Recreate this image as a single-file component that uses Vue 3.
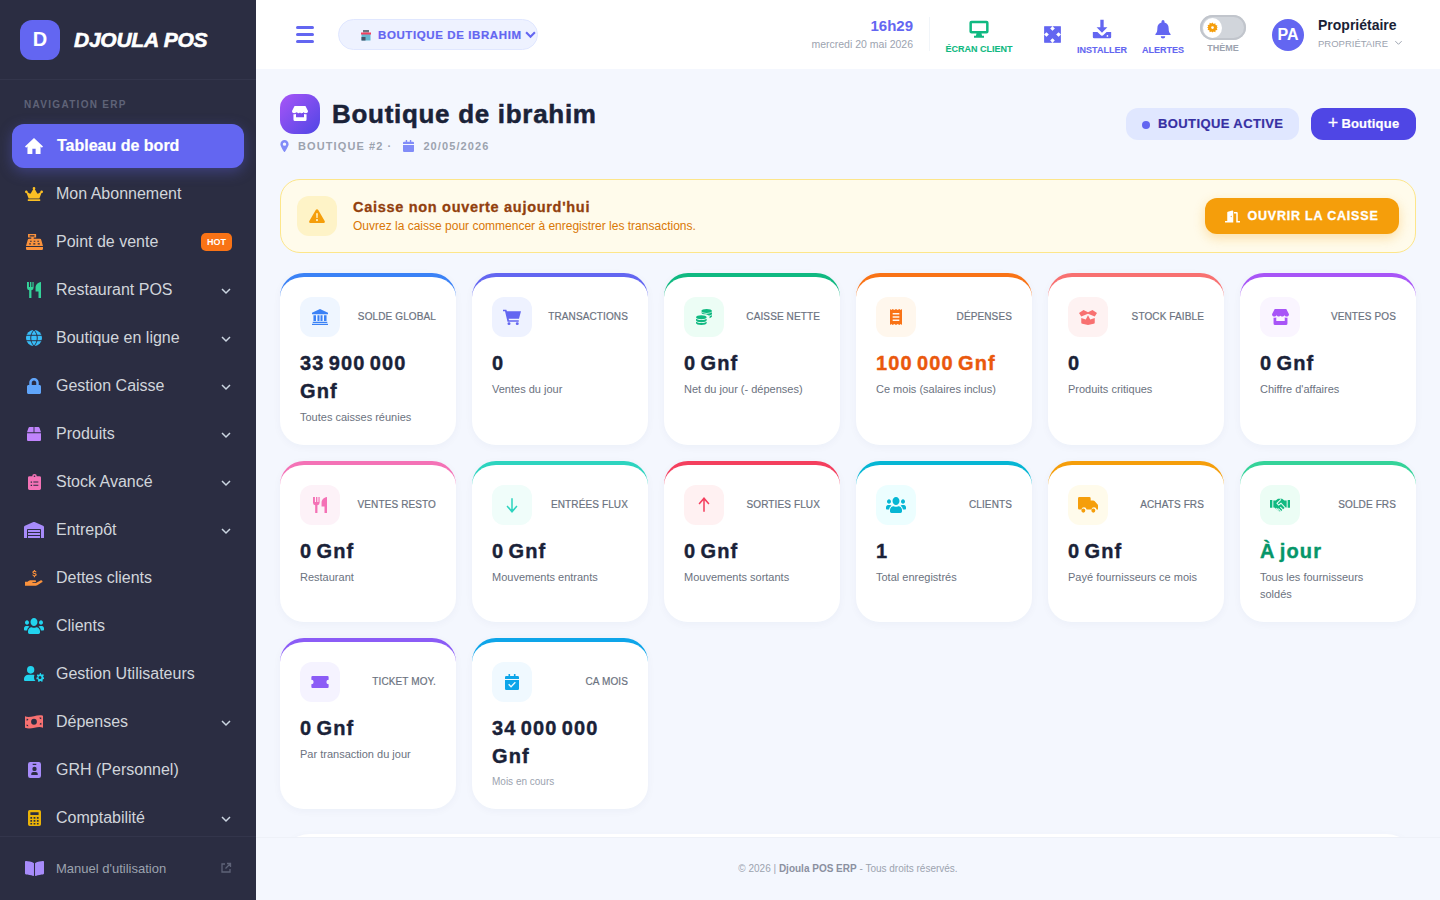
<script setup>
const icons = {
  home: { vb: '1 3 22 18', d: 'M12 3 1 12.5 2.400 14 4 12.700V21h6v-6h4v6h6v-8.300l1.600 1.300L23 12.500z' },
  crown: { vb: '0 0 640 512', d: 'M528 448H112c-8.800 0-16 7.200-16 16v32c0 8.800 7.200 16 16 16h416c8.800 0 16-7.200 16-16v-32c0-8.800-7.200-16-16-16zm64-320c-26.500 0-48 21.500-48 48 0 7.100 1.600 13.700 4.400 19.800L476 239.200c-15.400 9.200-35.300 4-44.200-11.600L350.300 85C361 76.200 368 63 368 48c0-26.500-21.500-48-48-48s-48 21.500-48 48c0 15 7 28.200 17.600 37l-81.500 142.600c-8.900 15.600-28.900 20.800-44.200 11.600l-72.300-43.400c2.700-6 4.400-12.700 4.400-19.800 0-26.500-21.500-48-48-48S0 149.500 0 176s21.500 48 48 48c2.600 0 5.200-.4 7.700-.8L128 416h384l72.300-192.800c2.500.4 5.100.8 7.700.8 26.500 0 48-21.500 48-48s-21.500-48-48-48z' },
  cash: { vb: '1.500 2 21 20', d: 'M4 2h10v4.500h-3V8h7.500a2 2 0 0 1 2 1.700L22.500 17h-21l2-7.300A2 2 0 0 1 5.500 8H8V6.500H4zM1.500 18.200h21v2.300A1.500 1.500 0 0 1 21 22H3a1.500 1.500 0 0 1-1.500-1.500zM6.500 10.300v1.500h2v-1.500zM11 10.300v1.500h2v-1.500zM15.500 10.300v1.500h2v-1.500zM5.500 13.500V15h2v-1.500zM10.500 13.500V15h2.500v-1.500zM16 13.500V15h2.500v-1.500zM6 3.500V5h6V3.500z' },
  utensils: { vb: '3 1 18 22', d: 'M3 1v8a3.500 3.500 0 0 0 2.800 3.400V23h2.900V12.400A3.500 3.500 0 0 0 11.500 9V1H10v7H8.600V1H6.900v7H5.500V1zM14 9c0-4 2.700-7.500 7-8v22h-3.200v-9H14z' },
  globe: { vb: '1 1 22 22', d: 'M12 1a11 11 0 1 0 0 22 11 11 0 0 0 0-22z', cut: 'M1 8.300h22M1 15.700h22M12 1c-6 6-6 16 0 22M12 1c6 6 6 16 0 22' },
  lock: { vb: '0 0 448 512', d: 'M400 224h-24v-72C376 68.200 307.800 0 224 0S72 68.200 72 152v72H48c-26.500 0-48 21.500-48 48v192c0 26.500 21.500 48 48 48h352c26.500 0 48-21.500 48-48V272c0-26.500-21.500-48-48-48zm-104 0H152v-72c0-39.700 32.300-72 72-72s72 32.300 72 72v72z' },
  box: { vb: '0 0 512 512', d: 'M509.500 184.600L458.900 32.800C452.400 13.200 434.100 0 413.400 0H272v192h238.700c-.4-2.500-.4-5-1.200-7.400zM240 0H98.600c-20.700 0-39 13.200-45.500 32.800L2.500 184.600c-.8 2.400-.8 4.900-1.200 7.400H240V0zM0 224v240c0 26.500 21.500 48 48 48h416c26.500 0 48-21.500 48-48V224H0z' },
  clipboard: { vb: '3.500 .5 17 22.500', d: 'M5.500 3.500H9a3 3 0 0 1 6 0h3.500A2 2 0 0 1 20.500 5.500V21a2 2 0 0 1-2 2h-13a2 2 0 0 1-2-2V5.500a2 2 0 0 1 2-2zM12 2.600a1.100 1.100 0 1 0 0 2.200 1.100 1.100 0 0 0 0-2.200zM7 11v1.800h1.800V11zM7 15.500v1.800h1.800v-1.800zM10.500 11.200v1.400H17v-1.400zM10.500 15.700v1.400H17v-1.400z' },
  warehouse: { vb: '0 0 640 512', d: 'M504 352H136.400c-4.400 0-8 3.600-8 8l-.1 48c0 4.400 3.600 8 8 8H504c4.400 0 8-3.600 8-8v-48c0-4.400-3.600-8-8-8zm0 96H136.100c-4.400 0-8 3.600-8 8l-.1 48c0 4.400 3.600 8 8 8h368c4.400 0 8-3.600 8-8v-48c0-4.400-3.600-8-8-8zm0-192H136.600c-4.400 0-8 3.600-8 8l-.1 48c0 4.400 3.600 8 8 8H504c4.400 0 8-3.600 8-8v-48c0-4.400-3.600-8-8-8zm106.500-139L338.400 3.700a48.150 48.150 0 0 0-36.900 0L29.500 117C11.700 124.500 0 141.900 0 161.300V504c0 4.400 3.600 8 8 8h80c4.400 0 8-3.600 8-8V256c0-17.600 14.600-32 32.600-32h382.800c18 0 32.600 14.400 32.600 32v248c0 4.400 3.600 8 8 8h80c4.400 0 8-3.600 8-8V161.300c0-19.400-11.700-36.800-29.500-44.300z' },
  hand: { vb: '.5 1 23 22', d: 'M.5 17h3.300c1.500-1.600 3.200-2 4.700-2h4.500c1 0 1.600.6 1.600 1.400s-.7 1.400-1.600 1.400H10v1h4.500l5.700-3.300c1-.5 2-.2 2.500.5.400.7.200 1.500-.5 2l-6 4c-.6.400-1.200.5-2 .5H.5zM11.800 1h1.500v1.200c1 .2 1.700.7 2 1.500l-1.200.6c-.3-.6-.8-.9-1.500-.9-.8 0-1.200.3-1.200.8 0 .5.500.7 1.500.9 1.400.3 2.500.8 2.500 2.300 0 1.100-.8 1.900-2.100 2.100V10.800h-1.500V9.500c-1.100-.2-1.900-.8-2.300-1.800l1.300-.5c.3.700.9 1.100 1.700 1.100.9 0 1.400-.3 1.400-.9 0-.5-.5-.7-1.600-1C10.900 6.100 10 5.600 10 4.200c0-1 .7-1.800 1.800-2z' },
  users: { vb: '0 32 640 448', d: 'M96 224c35.300 0 64-28.700 64-64s-28.700-64-64-64-64 28.700-64 64 28.700 64 64 64zm448 0c35.300 0 64-28.700 64-64s-28.700-64-64-64-64 28.700-64 64 28.700 64 64 64zm32 32h-64c-17.600 0-33.500 7.100-45.100 18.600 40.300 22.100 68.900 62 75.100 109.400h66c17.700 0 32-14.300 32-32v-32c0-35.300-28.700-64-64-64zm-256 0c61.900 0 112-50.100 112-112S381.900 32 320 32 208 82.100 208 144s50.100 112 112 112zm76.800 32h-8.300c-20.800 10-43.900 16-68.500 16s-47.600-6-68.500-16h-8.300C179.600 288 128 339.600 128 403.200V432c0 26.500 21.500 48 48 48h288c26.500 0 48-21.500 48-48v-28.800c0-63.600-51.600-115.200-115.200-115.200zm-223.700-13.400C161.500 263.100 145.600 256 128 256H64c-35.300 0-64 28.700-64 64v32c0 17.700 14.300 32 32 32h65.900c6.300-47.400 34.900-87.300 75.200-109.400z' },
  usercog: { vb: '0 1 30 23', d: 'M10 1a5.500 5.500 0 1 1 0 11 5.500 5.500 0 0 1 0-11zM6.500 13.500h7c.8 0 1.500.1 2.200.3-.5 1-.7 2.100-.7 3.200 0 2.200.9 4.200 2.300 5.500H1.500A1.500 1.500 0 0 1 0 21v-1.500c0-3.300 3-6 6.500-6zM24 11l1.200.1.500 1.800 1.300.6 1.600-.9 1.200 1.700-1.100 1.400.2 1.300 1.600.7-.3 2.100-1.800.2-.7 1.100.6 1.700-1.900 1-1.100-1.300h-1.500L22.600 24l-1.900-1 .6-1.700-.7-1.100-1.800-.2-.3-2.100 1.600-.7.200-1.300-1.100-1.400 1.200-1.700 1.600.9 1.300-.6.500-1.800zM24 15.200a2.200 2.200 0 1 0 0 4.400 2.200 2.200 0 0 0 0-4.400z' },
  money: { vb: '1 2 28 21', d: 'M1 4C9 8 19 0 29 3v18C21 17 11 25 1 21zM15 7.500a4.500 4.500 0 1 0 0 9 4.500 4.500 0 0 0 0-9zM3.500 7.500v3a3 3 0 0 0 2.800-2.600zM26.500 16.500v-3a3 3 0 0 0-2.800 2.800zM26.300 5.700l-3 .1a3 3 0 0 0 3 2.700zM3.500 18.500l2.800.4a3 3 0 0 0-2.800-2.800z' },
  idbadge: { vb: '3 1 18 22', d: 'M6 1h12a3 3 0 0 1 3 3v16a3 3 0 0 1-3 3H6a3 3 0 0 1-3-3V4a3 3 0 0 1 3-3zM12 7.500a3 3 0 1 0 0 6 3 3 0 0 0 0-6zM7.500 19h9v-1.500c0-1.500-1.200-2.700-2.700-2.700h-3.600c-1.500 0-2.700 1.200-2.700 2.700zM9.500 3.500V5h5V3.500z' },
  calc: { vb: '2.500 1 19 22', d: 'M5 1h14a2.500 2.500 0 0 1 2.500 2.500v17A2.500 2.500 0 0 1 19 23H5a2.500 2.500 0 0 1-2.500-2.500v-17A2.500 2.500 0 0 1 5 1zM6 4v4h12V4zM6 10.500v2.500h2.500v-2.500zM10.700 10.500v2.500h2.600v-2.500zM15.500 10.500v2.500H18v-2.500zM6 14.800v2.500h2.500v-2.500zM10.700 14.800v2.500h2.600v-2.500zM15.500 14.800v2.500H18v-2.500zM6 18.800V21h2.500v-2.200zM10.700 18.800V21h2.600v-2.200zM15.500 18.800V21H18v-2.200z' },
  book: { vb: '0 30 576 450', d: 'M542.220 32.050c-54.800 3.110-163.720 14.430-230.960 55.590-4.640 2.840-7.270 7.890-7.270 13.170v363.870c0 11.550 12.630 18.850 23.280 13.490 69.180-34.820 169.230-44.320 218.700-46.920 16.890-.89 30.020-14.430 30.020-30.660V62.750c.01-17.710-15.350-31.740-33.770-30.700zM264.730 87.640C197.500 46.480 88.580 35.170 33.780 32.050 15.360 31.010 0 45.040 0 62.750V400.600c0 16.240 13.130 29.780 30.020 30.660 49.490 2.600 149.590 12.110 218.770 46.950 10.620 5.350 23.210-1.940 23.210-13.460V100.630c0-5.290-2.620-10.140-7.270-12.990z' },
  store: { vb: '1 2.500 22 20', d: 'M4.500 2.500h15L23 9c0 1.800-1.400 3-3 3-1.200 0-2.300-.6-2.800-1.600-.6 1-1.800 1.600-3 1.600s-1.700-.4-2.200-1c-.5.600-1.200 1-2.200 1-1.200 0-2.400-.6-3-1.600C6.300 11.400 5.200 12 4 12c-1.600 0-3-1.200-3-3zM3 13.400c.3.100.7.100 1 .1 1 0 1.800-.2 2.500-.7v4.700h11v-4.700c.7.500 1.500.7 2.500.7.300 0 .7 0 1-.1v7.100a2 2 0 0 1-2 2H5a2 2 0 0 1-2-2z' },
  marker: { vb: '0 0 352 512', d: 'M156.300 501.700C26 291 0 214.500 0 176 0 78.800 78.800 0 176 0s176 78.800 176 176c0 38.500-26 115-156.300 325.700-9 13.700-30.400 13.700-39.400 0zM176 248a72 72 0 1 0 0-144 72 72 0 0 0 0 144z' },
  calendar: { vb: '2 1 20 22', d: 'M7 1h2.500v3H14.500V1H17v3h3a2 2 0 0 1 2 2v2.500H2V6a2 2 0 0 1 2-2h3zM2 10h20v11a2 2 0 0 1-2 2H4a2 2 0 0 1-2-2z' },
  desktop: { vb: '0 0 24 24', d: 'M3 2h18a2.500 2.500 0 0 1 2.500 2.500V15a2.500 2.500 0 0 1-2.500 2.500h-6l.7 2.500H18v2.500H6V20h2.300l.7-2.500H3A2.500 2.500 0 0 1 .5 15V4.500A2.500 2.500 0 0 1 3 2zM3.500 5v9.500h17V5z' },
  expand: { vb: '0 0 24 24', d: 'M1 1h9L7.500 3.500 12 8l4.500-4.500L14 1h9v9l-2.500-2.500L16 12l4.500 4.500L23 14v9h-9l2.500-2.500L12 16l-4.500 4.500L10 23H1v-9l2.500 2.500L8 12 3.500 7.500 1 10z' },
  download: { vb: '0 0 24 24', d: 'M10 1h4v9h4.500L12 16.500 5.500 10H10zM1 15.500h5.500L10 19a2.800 2.800 0 0 0 4 0l3.500-3.500H23v6a1.500 1.500 0 0 1-1.500 1.500h-19A1.500 1.500 0 0 1 1 21.500zM18.500 19.300a1 1 0 1 0 0 2 1 1 0 0 0 0-2z' },
  bell: { vb: '0 0 24 24', d: 'M12 0a2 2 0 0 1 2 2v1.200c3.500.8 5.500 3.700 5.500 7.300 0 5 1 6.500 2.500 8 .5.600.2 1.500-.8 1.500H2.800c-1 0-1.300-.9-.8-1.500 1.500-1.500 2.500-3 2.500-8 0-3.600 2-6.500 5.500-7.300V2a2 2 0 0 1 2-2zM9 21.500h6a3 3 0 0 1-6 0z' },
  sun: { vb: '0 0 24 24', d: 'M12 1l2.500 3.200 3.800-1.400.4 4 4 .7-1.500 3.700L24 12l-2.800 1.800 1.500 3.700-4 .7-.4 4-3.800-1.400L12 23l-2.500-2.200-3.800 1.400-.4-4-4-.7 1.500-3.700L0 12l2.800-1.800L1.300 6.500l4-.7.4-4 3.800 1.400zM12 9a3 3 0 1 0 0 6 3 3 0 0 0 0-6z' },
  warning: { vb: '0 0 24 24', d: 'M12 2c.8 0 1.500.4 1.900 1.100l9.600 16.500c.8 1.400-.2 3-1.900 3H2.400c-1.700 0-2.700-1.600-1.900-3L10.100 3.100C10.500 2.400 11.200 2 12 2zM10.700 8l.4 7h1.800l.4-7zM12 16.500a1.600 1.600 0 1 0 0 3.200 1.600 1.600 0 0 0 0-3.200z' },
  door: { vb: '0 0 640 512', d: 'M624 448h-80V113.400C544 86.200 522.500 64 496 64H384v64h96v384h144c8.800 0 16-7.200 16-16v-32c0-8.800-7.200-16-16-16zM312.200 1L120.200 50.700C105.800 54.400 96 67.100 96 81.900V448H16c-8.800 0-16 7.200-16 16v32c0 8.800 7.200 16 16 16h336V33.200c0-21-19.500-36.500-39.800-32.200zM264 288c-13.300 0-24-14.300-24-32s10.700-32 24-32 24 14.300 24 32-10.700 32-24 32z' },
  bank: { vb: '1 0 22 24', d: 'M12 0 23 5.500V8H1V5.500zM3 9.500h3.500V18H3zM8.500 9.500h2.800V18H8.500zM12.700 9.500h2.800V18h-2.800zM17.500 9.500H21V18h-3.500zM2 19.300h20V21H2zM1 22h22v2H1z' },
  cart: { vb: '0 0 24 24', d: 'M0 1h4.500l.7 2.500H24l-2.700 11H7.500l.5 2.200h13v2.300H6L2.700 3.300H0zM8 20a2 2 0 1 1 0 4 2 2 0 0 1 0-4zM19 20a2 2 0 1 1 0 4 2 2 0 0 1 0-4z' },
  coins: { vb: '0 0 24 24', d: 'M16 0c4.400 0 8 1.300 8 3s-3.600 3-8 3-8-1.300-8-3 3.600-3 8-3zM8 5c1.700 1.200 4.900 2 8 2s6.300-.8 8-2v2c0 1.400-2.100 2.500-5 2.900C17.200 8.800 14.700 8 12 8c-2.300 0-4-1.300-4-3zM24 9v2c0 1.200-1.600 2.200-3.800 2.700L20.500 11C22 10.700 23.300 10 24 9zM8 9.500c4.400 0 8 1.300 8 3s-3.600 3-8 3-8-1.300-8-3 3.600-3 8-3zM0 14.500c1.700 1.200 4.900 2 8 2s6.300-.8 8-2v2.200c0 1.700-3.600 3-8 3s-8-1.300-8-3zM0 19c1.700 1.200 4.900 2 8 2s6.300-.8 8-2v2c0 1.700-3.600 3-8 3s-8-1.300-8-3z' },
  receipt: { vb: '0 0 18 24', d: 'M0 0l2 1.500L4 0l2.500 1.500L9 0l2.500 1.500L14 0l2 1.500L18 0v24l-2-1.500-2 1.500-2.500-1.500L9 24l-2.500-1.500L4 24l-2-1.500L0 24zM4 6v2.200h10V6zM4 10.900v2.200h10v-2.200zM4 15.800V18h10v-2.200z' },
  boxopen: { vb: '0 0 24 20', d: 'M0 4 6 0l6 3 6-3 6 4-3 4.500L12 5 3 8.500zM3 10.500l6 2L12 7l3 5.500 6-2v6a2 2 0 0 1-1.500 1.900L12 20l-7.500-1.600A2 2 0 0 1 3 16.500z' },
  ticket: { vb: '0 0 24 16', d: 'M2 0h20a1.500 1.500 0 0 1 1.500 1.500V5a3 3 0 0 0 0 6v3.500A1.500 1.500 0 0 1 22 16H2A1.500 1.500 0 0 1 .5 14.500V11a3 3 0 0 0 0-6V1.500A1.500 1.500 0 0 1 2 0z' },
  calcheck: { vb: '1 0 22 24', d: 'M6.500 0H9v3h6V0h2.500v3H21a2 2 0 0 1 2 2v2.500H1V5a2 2 0 0 1 2-2h3.500zM1 9h22v13a2 2 0 0 1-2 2H3a2 2 0 0 1-2-2zM16.500 11.800l-6 6-3-3-1.500 1.500 4.500 4.500 7.500-7.500z' },
  arrowDown: { vb: '0 0 24 24', stroke: true, d: 'M12 2v20M3.500 13.500 12 22l8.500-8.500' },
  arrowUp: { vb: '0 0 24 24', stroke: true, d: 'M12 22V2M3.500 10.500 12 2l8.500 8.500' },
  truck: { vb: '0 1 30 23', d: 'M2 1h15a2 2 0 0 1 2 2v3h3.800c.8 0 1.500.3 2 .9l4.300 4.600c.6.500.9 1.200.9 2V19h-2.100a4 4 0 0 0-7.800 0h-7.200a4 4 0 0 0-7.800 0H2a2 2 0 0 1-2-2V3a2 2 0 0 1 2-2zM8 17.500a3 3 0 1 1 0 6 3 3 0 0 1 0-6zM23 17.500a3 3 0 1 1 0 6 3 3 0 0 1 0-6z' },
  handshake: { vb: '0 3 30 20', d: 'M0 6h3.500v11H0zM26.500 6H30v11h-3.500zM5 6.500h3.500L12 4h6l3.500 2.500H25v10h-2.500L16.500 22h-3l-7-5.500H5z', cut: 'M16.500 5 10.500 10.500 13 13 16.500 10.500 23 17M13 21 9.500 17.500M16.500 22 12.500 18M19.500 20 15.500 16', cutWidth: 1.500 }
}

const navItems = [
  { label: 'Mon Abonnement', icon: 'crown', color: '#fbbf24', w: 18, h: 14 },
  { label: 'Point de vente', icon: 'cash', color: '#fb923c', w: 17, h: 16, hot: true },
  { label: 'Restaurant POS', icon: 'utensils', color: '#34d399', w: 14, h: 16, arrow: true },
  { label: 'Boutique en ligne', icon: 'globe', color: '#38bdf8', w: 16, h: 16, arrow: true },
  { label: 'Gestion Caisse', icon: 'lock', color: '#60a5fa', w: 14, h: 16, arrow: true },
  { label: 'Produits', icon: 'box', color: '#c084fc', w: 14, h: 14, arrow: true },
  { label: 'Stock Avancé', icon: 'clipboard', color: '#f472b6', w: 13, h: 16, arrow: true },
  { label: 'Entrepôt', icon: 'warehouse', color: '#a78bfa', w: 20, h: 16, arrow: true },
  { label: 'Dettes clients', icon: 'hand', color: '#fb923c', w: 18, h: 16 },
  { label: 'Clients', icon: 'users', color: '#22d3ee', w: 20, h: 16 },
  { label: 'Gestion Utilisateurs', icon: 'usercog', color: '#22d3ee', w: 20, h: 16 },
  { label: 'Dépenses', icon: 'money', color: '#f87171', w: 18, h: 14, arrow: true },
  { label: 'GRH (Personnel)', icon: 'idbadge', color: '#a78bfa', w: 13, h: 16 },
  { label: 'Comptabilité', icon: 'calc', color: '#eab308', w: 13, h: 16, arrow: true }
]

const stats = [
  { label: 'Solde global', value: '33 900 000 Gnf', desc: 'Toutes caisses réunies', icon: 'bank', w: 16, h: 16, color: '#3b82f6', tint: '#eff6ff' },
  { label: 'Transactions', value: '0', desc: 'Ventes du jour', icon: 'cart', w: 18, h: 16, color: '#6366f1', tint: '#eef2ff' },
  { label: 'Caisse nette', value: '0 Gnf', desc: 'Net du jour (- dépenses)', icon: 'coins', w: 16, h: 16, color: '#10b981', tint: '#ecfdf5' },
  { label: 'Dépenses', value: '100 000 Gnf', desc: 'Ce mois (salaires inclus)', icon: 'receipt', w: 12, h: 16, color: '#f97316', tint: '#fff7ed', valueColor: '#ea580c' },
  { label: 'Stock faible', value: '0', desc: 'Produits critiques', icon: 'boxopen', w: 18, h: 15, color: '#f87171', tint: '#fef2f2' },
  { label: 'Ventes POS', value: '0 Gnf', desc: "Chiffre d'affaires", icon: 'store', w: 17, h: 16, color: '#a855f7', tint: '#faf5ff' },
  { label: 'Ventes Resto', value: '0 Gnf', desc: 'Restaurant', icon: 'utensils', w: 14, h: 16, color: '#f472b6', tint: '#fdf2f8' },
  { label: 'Entrées flux', value: '0 Gnf', desc: 'Mouvements entrants', icon: 'arrowDown', w: 14, h: 16, color: '#2dd4bf', tint: '#f0fdfa' },
  { label: 'Sorties flux', value: '0 Gnf', desc: 'Mouvements sortants', icon: 'arrowUp', w: 14, h: 16, color: '#f43f5e', tint: '#fff1f2' },
  { label: 'Clients', value: '1', desc: 'Total enregistrés', icon: 'users', w: 20, h: 16, color: '#06b6d4', tint: '#ecfeff' },
  { label: 'Achats FRS', value: '0 Gnf', desc: 'Payé fournisseurs ce mois', icon: 'truck', w: 20, h: 16, color: '#f59e0b', tint: '#fffbeb' },
  { label: 'Solde FRS', value: 'À jour', desc: 'Tous les fournisseurs soldés', icon: 'handshake', w: 20, h: 14, color: '#34d399', iconColor: '#10b981', tint: '#ecfdf5', valueColor: '#059669' },
  { label: 'Ticket moy.', value: '0 Gnf', desc: 'Par transaction du jour', icon: 'ticket', w: 18, h: 12, color: '#8b5cf6', tint: '#f5f3ff' },
  { label: 'CA mois', value: '34 000 000 Gnf', desc: 'Mois en cours', icon: 'calcheck', w: 14, h: 16, color: '#0ea5e9', tint: '#f0f9ff', small: true }
]
</script>

<template>
  <div class="layout">
    <aside class="sidebar">
      <div class="brand">
        <div class="brand-logo">D</div>
        <span class="brand-name">DJOULA POS</span>
      </div>
      <div class="nav-scroll">
        <div class="nav-title">NAVIGATION ERP</div>
        <nav class="nav">
          <a class="nav-item active">
            <span class="nav-icon"><svg width="18" height="16" :viewBox="icons.home.vb" preserveAspectRatio="none"><path :d="icons.home.d" fill="#fff" /></svg></span>
            <span class="nav-label">Tableau de bord</span>
          </a>
          <a v-for="item in navItems" :key="item.label" class="nav-item">
            <span class="nav-icon" :style="{ color: item.color }">
              <svg :width="item.w" :height="item.h" :viewBox="icons[item.icon].vb" fill="currentColor" preserveAspectRatio="none">
                <path :d="icons[item.icon].d" fill-rule="evenodd" />
                <path v-if="icons[item.icon].cut" :d="icons[item.icon].cut" fill="none" stroke="#2b2d42" stroke-width="1.300" />
              </svg>
            </span>
            <span class="nav-label">{{ item.label }}</span>
            <span v-if="item.hot" class="hot">HOT</span>
            <svg v-if="item.arrow" class="chev" width="10" height="10" viewBox="0 0 10 10"><path d="M1 3l4 4 4-4" fill="none" stroke="#cbd5e1" stroke-width="1.500" /></svg>
          </a>
        </nav>
      </div>
      <div class="side-foot">
        <span class="nav-icon foot-icon"><svg width="19" height="15" :viewBox="icons.book.vb" preserveAspectRatio="none" fill="#a78bfa"><path :d="icons.book.d" /></svg></span>
        <span class="foot-label">Manuel d'utilisation</span>
        <svg width="12" height="12" viewBox="0 0 12 12" fill="none" stroke="#5f6378" stroke-width="1.300"><path d="M5 2H2v8h8V7M7 1.500h3.500V5M10.500 1.500 5.500 6.500" /></svg>
      </div>
    </aside>

    <div class="main">
      <header class="topbar">
        <button class="burger"><span></span><span></span><span></span></button>
        <div class="shop-select">
          <svg width="12" height="12" viewBox="0 0 12 12"><rect x="1.500" y="4" width="9" height="7.500" fill="#67b7d1" /><rect x="1.500" y="8" width="4" height="3.500" fill="#475569" /><rect x="3" y="1" width="6" height="2.500" fill="#6b7280" /><rect x="1" y="3.500" width="10" height="2" fill="#f43f5e" /></svg>
          <span class="shop-name">BOUTIQUE DE IBRAHIM</span>
          <svg width="11" height="11" viewBox="0 0 10 10"><path d="M1 3l4 4 4-4" fill="none" stroke="#6366f1" stroke-width="1.900" /></svg>
        </div>
        <div class="spacer"></div>
        <div class="clock">
          <div class="time">16h29</div>
          <div class="date">mercredi 20 mai 2026</div>
        </div>
        <div class="tool client">
          <svg width="22" height="20" :viewBox="icons.desktop.vb" fill="#10b981"><path :d="icons.desktop.d" fill-rule="evenodd" /></svg>
          <span>ÉCRAN CLIENT</span>
        </div>
        <svg class="expand" width="17" height="17" :viewBox="icons.expand.vb" preserveAspectRatio="none" fill="#6366f1" stroke="#6366f1" stroke-width="1.600"><path :d="icons.expand.d" /></svg>
        <div class="tool install">
          <svg width="20" height="20" :viewBox="icons.download.vb" fill="#6366f1"><path :d="icons.download.d" fill-rule="evenodd" /></svg>
          <span>INSTALLER</span>
        </div>
        <div class="tool alert-tool">
          <svg width="18" height="20" :viewBox="icons.bell.vb" fill="#6366f1"><path :d="icons.bell.d" /></svg>
          <span>ALERTES</span>
        </div>
        <div class="theme">
          <div class="switch">
            <div class="knob"><svg width="11" height="11" :viewBox="icons.sun.vb" fill="#f59e0b"><path :d="icons.sun.d" fill-rule="evenodd" /></svg></div>
          </div>
          <span>THÈME</span>
        </div>
        <div class="avatar">PA</div>
        <div class="user">
          <div class="user-name">Propriétaire</div>
          <div class="user-role">PROPRIÉTAIRE
            <svg width="9" height="9" viewBox="0 0 10 10"><path d="M1.500 3.500 5 7l3.500-3.500" fill="none" stroke="#9ca3af" stroke-width="1.100" /></svg>
          </div>
        </div>
      </header>

      <div class="content">
        <section class="page-head">
          <div class="head-left">
            <div class="title-row">
              <div class="title-icon"><svg width="16" height="15" :viewBox="icons.store.vb" preserveAspectRatio="none" fill="#fff"><path :d="icons.store.d" /></svg></div>
              <h1>Boutique de ibrahim</h1>
            </div>
            <div class="meta">
              <svg width="9" height="12" :viewBox="icons.marker.vb" fill="#818cf8"><path :d="icons.marker.d" fill-rule="evenodd" /></svg>
              <span class="meta-a">BOUTIQUE #2 ·</span>
              <svg class="meta-cal" width="11" height="12" :viewBox="icons.calendar.vb" preserveAspectRatio="none" fill="#818cf8"><path :d="icons.calendar.d" /></svg>
              <span>20/05/2026</span>
            </div>
          </div>
          <div class="head-actions">
            <div class="badge"><i></i><span>BOUTIQUE ACTIVE</span></div>
            <button class="add-btn"><b>+</b>Boutique</button>
          </div>
        </section>

        <section class="alert">
          <div class="alert-icon"><svg width="16" height="16" :viewBox="icons.warning.vb" fill="#f59e0b"><path :d="icons.warning.d" fill-rule="evenodd" /></svg></div>
          <div class="alert-text">
            <div class="alert-title">Caisse non ouverte aujourd'hui</div>
            <div class="alert-desc">Ouvrez la caisse pour commencer à enregistrer les transactions.</div>
          </div>
          <button class="open-btn">
            <svg width="15" height="13" :viewBox="icons.door.vb" fill="#fff"><path :d="icons.door.d" fill-rule="evenodd" /></svg>
            OUVRIR LA CAISSE
          </button>
        </section>

        <section class="grid">
          <article v-for="s in stats" :key="s.label" class="card" :style="{ borderTopColor: s.color }">
            <div class="card-top">
              <div class="card-icon" :style="{ background: s.tint, color: s.iconColor || s.color }">
                <svg v-if="icons[s.icon].stroke" :width="s.w" :height="s.h" :viewBox="icons[s.icon].vb" preserveAspectRatio="none" fill="none" stroke="currentColor" stroke-width="2.600"><path :d="icons[s.icon].d" /></svg>
                <svg v-else :width="s.w" :height="s.h" :viewBox="icons[s.icon].vb" preserveAspectRatio="none" fill="currentColor">
                  <path :d="icons[s.icon].d" fill-rule="evenodd" />
                  <path v-if="icons[s.icon].cut" :d="icons[s.icon].cut" fill="none" :stroke="s.tint" :stroke-width="icons[s.icon].cutWidth" />
                </svg>
              </div>
              <div class="card-label">{{ s.label }}</div>
            </div>
            <div class="card-value" :style="{ color: s.valueColor }">{{ s.value }}</div>
            <div class="card-desc" :class="{ small: s.small }">{{ s.desc }}</div>
          </article>
        </section>

        <div class="next-card"></div>
      </div>

      <footer class="foot">© 2026 | <strong>Djoula POS ERP</strong> - Tous droits réservés.</footer>
    </div>
  </div>
</template>

<style>
html, body { margin: 0; height: 100%; overflow: hidden; }
</style>

<style scoped>
.layout {
  display: flex;
  height: 100vh;
  font-family: "Liberation Sans", Arial, sans-serif;
  background: #f4f7fe;
  color: #1e293b;
}

/* sidebar */
.sidebar {
  width: 256px;
  flex: none;
  background: #2b2d42;
  display: flex;
  flex-direction: column;
}
.brand {
  height: 80px;
  flex: none;
  box-sizing: border-box;
  padding: 0 20px;
  display: flex;
  align-items: center;
  gap: 14px;
  border-bottom: 1px solid #33354b;
}
.brand-logo {
  width: 40px;
  height: 40px;
  border-radius: 12px;
  background: #6366f1;
  color: #fff;
  font-weight: 700;
  font-size: 20px;
  display: flex;
  align-items: center;
  justify-content: center;
}
.brand-name {
  color: #fff;
  font-size: 21px;
  font-weight: 700;
  font-style: italic;
  -webkit-text-stroke: .6px #fff;
  letter-spacing: -.25px;
  margin-top: 1px;
}
.nav-scroll { flex: 1; min-height: 0; overflow: hidden; padding: 19px 12px 0; }
.nav-title {
  font-size: 10px;
  font-weight: 700;
  letter-spacing: 1.300px;
  color: #5f6378;
  padding: 0 12px;
  margin-bottom: 14px;
}
.nav { display: flex; flex-direction: column; gap: 4px; }
.nav-item {
  height: 44px;
  flex: none;
  display: flex;
  align-items: center;
  padding: 0 12px;
  border-radius: 12px;
  color: #d1d5db;
  font-size: 16px;
}
.nav-item.active {
  background: #6366f1;
  color: #fff;
  font-weight: 700;
  -webkit-text-stroke: .2px #fff;
  box-shadow: 0 4px 14px rgba(99, 102, 241, .35);
}
.nav-item.active .nav-label { padding-left: 1px; }
.nav-icon {
  width: 20px;
  margin-right: 12px;
  display: flex;
  justify-content: center;
  flex: none;
}
.nav-label { flex: 1; }
.hot {
  background: #f97316;
  color: #fff;
  font-size: 9px;
  font-weight: 700;
  padding: 2px 6px;
  line-height: 14px;
  border-radius: 5px;
}
.chev { margin: 2px 1px 0 0; }
.side-foot {
  height: 64px;
  flex: none;
  box-sizing: border-box;
  border-top: 1px solid #33354b;
  display: flex;
  align-items: center;
  padding: 0 24px 1px;
  font-size: 13px;
  color: #9ca3af;
}
.foot-label { flex: 1; }

/* main */
.main { flex: 1; min-width: 0; display: flex; flex-direction: column; }
.topbar {
  height: 69px;
  flex: none;
  box-sizing: border-box;
  background: #fff;
  display: flex;
  align-items: center;
  padding: 0 24px 0 40px;
}
.burger {
  width: 18px;
  border: 0;
  padding: 0;
  background: none;
  display: flex;
  flex-direction: column;
  gap: 4px;
  margin-right: 24px;
}
.burger span { height: 3px; border-radius: 2px; background: #6366f1; }
.shop-select {
  width: 200px;
  height: 31px;
  box-sizing: border-box;
  background: #eef2ff;
  border: 1px solid #e0e7ff;
  border-radius: 16px;
  display: flex;
  align-items: center;
  gap: 6px;
  padding-left: 21px;
  color: #6366f1;
  font-size: 11.500px;
  font-weight: 700;
  letter-spacing: .6px;
  -webkit-text-stroke: .2px #6366f1;
  white-space: nowrap;
}
.shop-name { margin-right: -3px; }
.spacer { flex: 1; }
.clock { text-align: right; padding-right: 16px; border-right: 1px solid #f1f5f9; height: 34px; margin-top: -2px; }
.time { color: #6366f1; font-size: 15px; font-weight: 700; line-height: 18px; }
.date { color: #9ca3af; font-size: 10.500px; line-height: 16px; margin-top: 1px; }
.tool {
  display: flex;
  flex-direction: column;
  align-items: center;
  gap: 6px;
  font-size: 9px;
  font-weight: 700;
  color: #6366f1;
  -webkit-text-stroke: .1px currentColor;
}
.client { color: #10b981; margin: 4px 0 0 15px; width: 68px; gap: 5px; }
.expand { margin-left: 31px; }
.install { margin: 4px 0 0 16px; width: 50px; }
.alert-tool { margin: 4px 0 0 16px; width: 40px; }
.theme {
  margin: -1px 0 0 17px;
  display: flex;
  flex-direction: column;
  align-items: center;
  gap: 3px;
  font-size: 9px;
  font-weight: 700;
  color: #9ca3af;
  width: 46px;
}
.switch {
  width: 46px;
  height: 25px;
  box-sizing: border-box;
  border-radius: 13px;
  background: #d1d5db;
  box-shadow: inset 0 0 0 2px #c1c5cc;
  padding: 2.500px 3px;
}
.knob {
  width: 19px;
  height: 20px;
  border-radius: 50%;
  background: #fff;
  display: flex;
  align-items: center;
  justify-content: center;
}
.avatar {
  margin-left: 26px;
  width: 32px;
  height: 32px;
  border-radius: 50%;
  background: #6366f1;
  color: #fff;
  font-weight: 700;
  font-size: 16px;
  display: flex;
  align-items: center;
  justify-content: center;
}
.user { margin: -2px 0 0 14px; width: 98px; }
.user-name { font-size: 14px; font-weight: 700; color: #1a1f36; line-height: 16px; }
.user-role { font-size: 9.500px; color: #9ca3af; line-height: 14px; margin-top: 4px; }
.user-role svg { margin-left: 3px; }

/* content */
.content { flex: 1; min-height: 0; overflow: hidden; padding: 24px 24px 0; }
.page-head { display: flex; justify-content: space-between; align-items: center; height: 62px; }
.head-left { margin-top: -2px; }
.title-row { display: flex; align-items: center; gap: 12px; }
.title-icon {
  width: 40px;
  height: 40px;
  border-radius: 14px;
  background: linear-gradient(135deg, #a855f7, #4f46e5);
  display: flex;
  align-items: center;
  justify-content: center;
}
h1 { margin: 1px 0 0; font-size: 26px; font-weight: 700; letter-spacing: .7px; color: #1a2238; -webkit-text-stroke: .5px #1a2238; }
.meta {
  display: flex;
  align-items: center;
  margin-top: 5px;
  font-size: 11px;
  font-weight: 700;
  letter-spacing: 1.100px;
  color: #9ca3af;
  line-height: 14px;
}
.meta-a { margin: 0 11px 0 9px; }
.meta-cal { margin-right: 9px; }
.head-actions { display: flex; gap: 12px; align-items: center; }
.badge {
  height: 32px;
  width: 173px;
  box-sizing: border-box;
  background: #e0e7ff;
  color: #3730a3;
  font-size: 13px;
  font-weight: 700;
  letter-spacing: .4px;
  -webkit-text-stroke: .2px #3730a3;
  border-radius: 12px;
  display: flex;
  align-items: center;
  padding: 0 0 1px 16px;
}
.badge i { width: 8px; height: 8px; border-radius: 50%; background: #6366f1; margin-right: 8px; margin-top: 3px; }
.add-btn {
  height: 32px;
  width: 105px;
  border: 0;
  border-radius: 12px;
  background: #4f46e5;
  color: #fff;
  font: 700 13px "Liberation Sans", Arial, sans-serif;
  letter-spacing: .2px;
  -webkit-text-stroke: .2px #fff;
  padding: 0 0 2px;
}
.add-btn b { font-size: 18px; font-weight: 400; margin-right: 3px; vertical-align: -1px; }

.alert {
  margin-top: 24px;
  height: 74px;
  flex: none;
  box-sizing: border-box;
  background: #fffbeb;
  border: 1px solid #fde68a;
  border-radius: 20px;
  display: flex;
  align-items: center;
  padding: 0 16px;
}
.alert-icon {
  width: 40px;
  height: 40px;
  border-radius: 12px;
  background: #fef3c7;
  display: flex;
  align-items: center;
  justify-content: center;
}
.alert-text { flex: 1; margin-left: 16px; }
.alert-title { font-size: 14.500px; font-weight: 700; letter-spacing: .7px; color: #92400e; line-height: 18px; -webkit-text-stroke: .3px #92400e; }
.alert-desc { font-size: 12px; color: #d97706; line-height: 16px; margin-top: 2px; }
.open-btn {
  width: 194px;
  height: 36px;
  border: 0;
  border-radius: 12px;
  background: #f59e0b;
  color: #fff;
  font: 700 12.500px "Liberation Sans", Arial, sans-serif;
  letter-spacing: .8px;
  -webkit-text-stroke: .3px #fff;
  box-shadow: 0 4px 12px rgba(245, 158, 11, .3);
  display: flex;
  align-items: center;
  justify-content: center;
  gap: 7px;
}

.grid {
  margin-top: 20px;
  display: grid;
  grid-template-columns: repeat(6, 1fr);
  gap: 16px;
}
.card {
  background: #fff;
  border-radius: 24px;
  border-top: 4px solid;
  padding: 20px 20px 19px;
  box-shadow: 0 2px 8px rgba(30, 41, 90, .04);
  box-sizing: border-box;
}
.card-top { display: flex; justify-content: space-between; align-items: center; margin-bottom: 12px; }
.card-icon {
  width: 40px;
  height: 40px;
  border-radius: 12px;
  display: flex;
  align-items: center;
  justify-content: center;
  flex: none;
}
.card-label {
  font-size: 10px;
  font-weight: 400;
  letter-spacing: .12px;
  -webkit-text-stroke: .2px #6b7280;
  color: #6b7280;
  text-transform: uppercase;
  text-align: right;
  white-space: nowrap;
  margin-bottom: 1px;
}
.card-value {
  font-size: 20px;
  font-weight: 700;
  line-height: 28px;
  letter-spacing: 1.150px;
  word-spacing: -2.500px;
  color: #1a2238;
  -webkit-text-stroke: .4px currentColor;
}
.card-desc { font-size: 11px; line-height: 17px; color: #6b7280; margin-top: 4px; }
.card-desc.small { font-size: 10px; line-height: 16px; color: #9ca3af; }

.next-card {
  margin-top: 25px;
  height: 60px;
  border-radius: 32px;
  background: #fff;
  box-shadow: 0 2px 8px rgba(30, 41, 90, .04);
}
.foot {
  height: 63px;
  flex: none;
  box-sizing: border-box;
  border-top: 1px solid #eef1f8;
  background: #f4f7fe;
  display: flex;
  align-items: center;
  justify-content: center;
  white-space: pre;
  font-size: 10px;
  color: #9ca3af;
  padding-bottom: 2px;
}
.foot strong { font-weight: 700; color: #8b90a0; }
</style>
